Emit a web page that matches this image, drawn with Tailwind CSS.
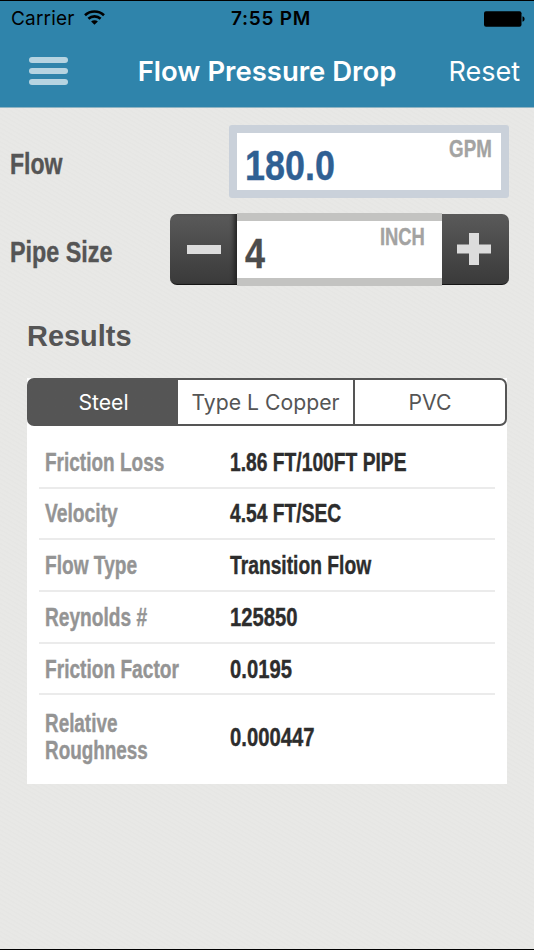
<!DOCTYPE html>
<html lang="en">

<head>
    <meta charset="UTF-8">
    <meta name="viewport" content="width=device-width, initial-scale=1.0">
    <title>Flow Pressure Drop</title>
    <script src="https://cdn.jsdelivr.net/npm/@tailwindcss/browser@4"></script>
</head>

<body class="bg-[#e7e7e5] font-['Liberation_Sans',Arial,sans-serif] font-bold text-[#555]">
    <div class="h-[950px] w-[534px] overflow-hidden flex flex-col border-y border-black bg-[repeating-linear-gradient(30deg,#e8e8e6_0px,#e8e8e6_2px,#e6e6e4_3px,#e6e6e4_4px)]">

        <header class="h-[107px] shrink-0 bg-[#2f84ab] border-b border-[#8fb4c3] font-['Inter',sans-serif]">
            <!-- Status bar -->
            <div class="h-[35px] grid grid-cols-[1fr_auto_1fr] items-center text-black text-[19px]">
                <div class="flex items-center gap-[9px] pl-[11px] pt-[2px]">
                    <span class="font-normal tracking-[0.2px]">Carrier</span>
                    <svg class="w-[21px] h-[15px] mb-[4px]" viewBox="0 0 21 15">
                        <g fill="none" stroke="#000" stroke-width="2.6">
                            <path d="M1 5.2C6.3 0.2 14.7 0.2 20 5.2" />
                            <path d="M4.4 8.8C7.8 5.6 13.2 5.6 16.6 8.8" />
                        </g>
                        <path d="M10.5 14.8L7.1 11.4C9 9.8 12 9.8 13.9 11.4Z" />
                    </svg>
                </div>
                <span class="pt-[2px] pl-[8px] font-semibold tracking-[0.75px]">7:55 PM</span>
                <svg class="w-[41px] h-[16px] mr-[9px] justify-self-end" viewBox="0 0 41 16">
                    <rect x="0" y="0.3" width="37.5" height="15.4" rx="2" />
                    <path d="M38.5 5.3C41.3 6 41.3 10 38.5 10.7Z" />
                </svg>
            </div>

            <!-- Nav bar -->
            <div class="h-[71px] grid grid-cols-[1fr_auto_1fr] items-center text-white text-[27px]">
                <div class="flex flex-col gap-[5px] pl-[29px] -mt-px">
                    <span class="h-[6px] w-[39px] rounded-full bg-[#b6d4e1]"></span>
                    <span class="h-[6px] w-[39px] rounded-full bg-[#b6d4e1]"></span>
                    <span class="h-[6px] w-[39px] rounded-full bg-[#b6d4e1]"></span>
                </div>
                <h1 class="pt-[1px] text-[27.5px] font-semibold">Flow Pressure Drop</h1>
                <span class="justify-self-end pt-[1px] pr-[14px] font-normal">Reset</span>
            </div>
        </header>

        <main>
            <div class="flex items-center justify-between mt-[17px] pl-[10px] pr-[25px] [-webkit-text-stroke:0.4px]">
                <label class="origin-left scale-x-[0.795] pt-[6px] text-[29px]">Flow</label>
                <div class="w-[280px] h-[73px] rounded-[3px] bg-[#cad1da] p-[8px]">
                    <div class="h-full flex justify-between bg-white pl-[8px] pr-[9px]">
                        <span class="origin-left scale-x-[0.835] text-[43px] leading-[65px] text-[#2f6093]">180.0</span>
                        <span class="origin-right scale-x-[0.765] text-[24.5px] leading-[32px] text-[#a3a3a2]">GPM</span>
                    </div>
                </div>
            </div>

            <div class="flex items-center justify-between mt-[15px] pl-[10px] pr-[25px] [-webkit-text-stroke:0.4px]">
                <label class="origin-left scale-x-[0.805] pt-[6px] text-[29px]">Pipe Size</label>
                <div class="flex items-center w-[339px] h-[73px]">
                    <button class="w-[67px] h-[71px] rounded-l-[7px] bg-linear-to-b from-[#5a5a5a] to-[#3a3a3a] border-b border-[#161616] shadow-[inset_-5px_0_4px_-2px_#252525] flex items-center justify-center">
                        <span class="w-[34px] h-[9px] bg-[#dcdcdc]"></span>
                    </button>
                    <div class="flex-1 h-full flex justify-between border-y-8 border-[#c3c3c1] bg-white pl-[8px] pr-[17px]">
                        <span class="origin-left scale-x-[0.835] text-[43px] leading-[65px] text-[#4c4c4c]">4</span>
                        <span class="origin-right scale-x-[0.75] text-[24.5px] leading-[32px] text-[#a3a3a2]">INCH</span>
                    </div>
                    <button class="w-[67px] h-[71px] rounded-r-[7px] bg-linear-to-b from-[#5a5a5a] to-[#3a3a3a] border-b border-[#161616] flex items-center justify-center">
                        <svg class="w-[34px] h-[32px] mr-[4px]" viewBox="0 0 34 32">
                            <path fill="#dcdcdc" d="M12 0H22V11.5H34V20.5H22V32H12V20.5H0V11.5H12Z" />
                        </svg>
                    </button>
                </div>
            </div>

            <h2 class="mt-[32px] ml-[27px] h-[60px] origin-left scale-x-[0.965] text-[30px] leading-[36px]">Results</h2>

            <section class="w-[480px] h-[406px] ml-[27px] bg-white">
                <div class="flex h-[48px] rounded-[7px] border-2 border-[#555] bg-linear-to-r from-[#555] from-30% to-white to-30% overflow-hidden font-['Inter',sans-serif] font-normal text-[21.2px] leading-[45px] text-center">
                    <span class="w-[149px] bg-linear-to-r from-transparent from-10% to-[#555] to-10% text-white">Steel</span>
                    <span class="w-[177px] bg-white border-r-2 border-[#555]">Type L Copper</span>
                    <span class="flex-1">PVC</span>
                </div>

                <dl class="mx-[12px] pt-[11px] text-[25px] leading-[27px] divide-y-2 divide-[#ebebeb] text-[#2d2d2d] [-webkit-text-stroke:0.4px]">
                    <div class="flex items-center h-[51.7px] pl-[6px] pt-[2px]">
                        <dt class="w-[185px] origin-left scale-x-[0.76] whitespace-nowrap text-[#949494]">Friction Loss</dt>
                        <dd class="origin-left scale-x-[0.77]">1.86 FT/100FT PIPE</dd>
                    </div>
                    <div class="flex items-center h-[51.7px] pl-[6px]">
                        <dt class="w-[185px] origin-left scale-x-[0.77] whitespace-nowrap text-[#949494]">Velocity</dt>
                        <dd class="origin-left scale-x-[0.77]">4.54 FT/SEC</dd>
                    </div>
                    <div class="flex items-center h-[51.7px] pl-[6px]">
                        <dt class="w-[185px] origin-left scale-x-[0.765] whitespace-nowrap text-[#949494]">Flow Type</dt>
                        <dd class="origin-left scale-x-[0.77]">Transition Flow</dd>
                    </div>
                    <div class="flex items-center h-[51.7px] pl-[6px] pt-[2px]">
                        <dt class="w-[185px] origin-left scale-x-[0.765] whitespace-nowrap text-[#949494]">Reynolds #</dt>
                        <dd class="origin-left scale-x-[0.81]">125850</dd>
                    </div>
                    <div class="flex items-center h-[51.7px] pl-[6px] pt-[2px]">
                        <dt class="w-[185px] origin-left scale-x-[0.765] whitespace-nowrap text-[#949494]">Friction Factor</dt>
                        <dd class="origin-left scale-x-[0.81]">0.0195</dd>
                    </div>
                    <div class="flex items-center h-[84px] pl-[6px]">
                        <dt class="w-[185px] origin-left scale-x-[0.755] whitespace-nowrap text-[#949494]">Relative<br>Roughness</dt>
                        <dd class="origin-left scale-x-[0.81]">0.000447</dd>
                    </div>
                </dl>
            </section>
        </main>
    </div>
</body>

</html>
